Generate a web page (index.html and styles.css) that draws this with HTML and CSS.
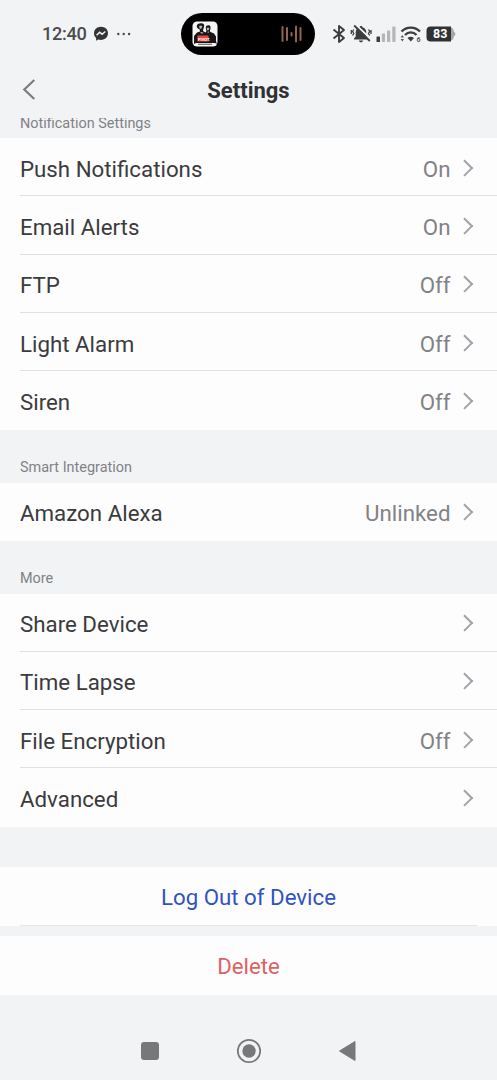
FILE: index.html
```html
<!DOCTYPE html>
<html lang="en">
<head>
<meta charset="utf-8">
<title>Settings</title>
<link rel="stylesheet" href="styles.css">
</head>
<body>
<div class="phone">
  <div class="status">
    <div class="status-left">
      <span class="clock">12:40</span>
      <svg class="messenger" width="16" height="16" viewBox="0 0 16 16"><path fill="#333436" d="M8 .8C3.900 .8 1 3.700 1 7.300c0 2 .8 3.700 2.100 4.800v2.600l2.200-1.200c.8.300 1.700.4 2.700.4 4.100 0 7-2.900 7-6.600S12.100.8 8 .8z"/><path fill="none" stroke="#f2f3f5" stroke-width="1.500" d="M3.600 9.200l3-3 2.500 2 3.200-2.700"/></svg>
      <svg width="16" height="4" viewBox="0 0 16 4"><g fill="#4a4b4d"><circle cx="2.300" cy="2" r="1.200"/><circle cx="7.700" cy="2" r="1.200"/><circle cx="13.100" cy="2" r="1.200"/></g></svg>
    </div>
    <div class="island">
      <svg width="26" height="26" viewBox="0 0 26 26"><rect x=".5" y=".5" width="25" height="25" rx="4.500" fill="#f5f5f5"/><path fill="#171719" d="M2 20v-5l3-3.500 3-1-.3-2L5.300 7C4 4.500 5.500 2.500 8 2.500c3-.7 5 1 4 3.200L11.300 8l-.3 2 2.500 1.500 1-1.500-.8-3c0-2.600 1.600-3 3.300-2.700 1.800.4 2 2.600 1 4.900v1.500l4 1.800 2 3V20l1 3-2-1H4l-2 1z"/><path fill="#bbb" d="M7.300 4.800h3l-.7 2.500-1.300.8-1-1.300zM14.700 6.700h2.600l-.5 2.200-1 .7-.9-1zM8 11l2 2 1.500-1.500zM15 11l1.500 1 .5-1.500z"/><path fill="#29292b" d="M6 22.800h14v.8H6z"/><path fill="#e74640" d="M5.500 14.500h11v6h-11z"/><text x="6" y="19.500" class="cover-title" fill="#fff">PIVOT.</text></svg>
      <svg width="24" height="18" viewBox="0 0 24 18"><g fill="none" stroke="#8f6450" stroke-width="2" stroke-linecap="round"><path d="M2.500 2v14"/><path d="M7 3v12"/><path d="M11.500 8v2.500"/><path d="M16 1.500v15"/><path d="M20.500 3v12"/></g></svg>
    </div>
    <div class="status-right">
      <svg width="14" height="20" viewBox="0 0 14 20"><path fill="none" stroke="#3b3c3e" stroke-width="1.900" stroke-linejoin="round" d="M1.500 5.500l10.500 8.500-5 4V2l5 4-10.500 8.500"/></svg>
      <svg width="22" height="20" viewBox="0 0 22 20"><path fill="#3b3c3e" d="M11 2c-1 0-1.500.6-1.500 1.300C7 4 5.700 6 5.700 8.500v4L4 14.500v1h14v-1l-1.700-2v-4c0-2.500-1.300-4.500-3.800-5.200C12.500 2.600 12 2 11 2zM8.800 16.500h4.400c-.3 1.200-1.200 1.800-2.200 1.800s-1.900-.6-2.200-1.800z"/><path stroke="#f2f3f5" stroke-width="2" d="M6 1L20.500 14.800"/><path stroke="#3b3c3e" stroke-width="1.800" d="M4.200 1.500L19.800 17"/><path fill="none" stroke="#3b3c3e" stroke-width="1.300" d="M3.800 5.500l-1.200 2 1.200 2-1.200 2M1.300 6v4M18.500 5.500l1.200 2-1.200 2 1.200 2M21 6v4"/></svg>
      <svg width="20" height="18" viewBox="0 0 20 18"><rect x=".5" y="11.500" width="3.500" height="5.500" rx=".6" fill="#3b3c3e"/><g fill="#b5b6b8"><rect x="5.800" y="8.500" width="3.200" height="8.500" rx=".6"/><rect x="11" y="5.500" width="3.200" height="11.500" rx=".6"/><rect x="16.300" y="1.500" width="3.200" height="15.500" rx=".6"/></g></svg>
      <svg width="22" height="18" viewBox="0 0 22 18"><g fill="none" stroke="#3b3c3e" stroke-width="2.300"><path d="M1.500 6.500c5-5.200 13.500-5.200 18.500 0"/><path d="M5 10c3.300-3.400 8.200-3.400 11.500 0"/></g><path fill="#3b3c3e" d="M7.500 13c1.800-1.700 4.700-1.700 6.500 0l-3.200 3.400z"/><path fill="#55565a" d="M.6 12.500l1.700-2.500L4 12.500zM.6 14l1.700 2.500L4 14z"/><text x="16.500" y="17" class="wifi-gen" fill="#55565a">6</text></svg>
      <svg width="30" height="16" viewBox="0 0 30 16"><path fill="#a5a6a8" d="M24 1.500c3 0 3.500 2 4 4.500 1 0 1.300 1 1.300 2s-.3 2-1.300 2c-.5 3-1.500 4.500-4 4.500z"/><path fill="#303133" d="M4.500.5H25v15H4.500c-2.500 0-4-1.500-4-4v-7c0-2.500 1.500-4 4-4z"/><text x="7" y="12.300" class="battery-level" fill="#fff">83</text></svg>
    </div>
  </div>
  <header class="header">
    <svg class="back" width="16" height="24" viewBox="0 0 16 24"><path fill="none" stroke="#7b7c7f" stroke-width="2.200" d="M14.300 2L4.300 11.500l10 9.500"/></svg>
    <h1 class="title">Settings</h1>
  </header>
  <main class="content">
    <h2 class="label label-cut">Notification Settings</h2>
    <section class="group">
      <div class="row"><span class="name">Push Notifications</span><span class="value">On</span><i class="chevron"></i></div>
      <div class="row"><span class="name">Email Alerts</span><span class="value">On</span><i class="chevron"></i></div>
      <div class="row"><span class="name">FTP</span><span class="value">Off</span><i class="chevron"></i></div>
      <div class="row"><span class="name">Light Alarm</span><span class="value">Off</span><i class="chevron"></i></div>
      <div class="row"><span class="name">Siren</span><span class="value">Off</span><i class="chevron"></i></div>
    </section>
    <h2 class="label">Smart Integration</h2>
    <section class="group">
      <div class="row"><span class="name">Amazon Alexa</span><span class="value">Unlinked</span><i class="chevron"></i></div>
    </section>
    <h2 class="label">More</h2>
    <section class="group">
      <div class="row"><span class="name">Share Device</span><i class="chevron"></i></div>
      <div class="row"><span class="name">Time Lapse</span><i class="chevron"></i></div>
      <div class="row"><span class="name">File Encryption</span><span class="value">Off</span><i class="chevron"></i></div>
      <div class="row"><span class="name">Advanced</span><i class="chevron"></i></div>
    </section>
    <div class="action logout">Log Out of Device</div>
    <div class="action delete">Delete</div>
  </main>
  <nav class="nav">
    <svg width="26" height="26" viewBox="0 0 26 26"><rect x="4" y="4" width="18" height="18" rx="3" fill="#77787a"/></svg>
    <svg width="26" height="26" viewBox="0 0 26 26"><circle cx="13" cy="13" r="11.200" fill="none" stroke="#77787a" stroke-width="1.700"/><circle cx="13" cy="13" r="6.700" fill="#77787a"/></svg>
    <svg width="26" height="26" viewBox="0 0 26 26"><path fill="#77787a" stroke="#77787a" stroke-linejoin="round" d="M4.500 13L20 3.500v19z"/></svg>
  </nav>
</div>
</body>
</html>
```
FILE: styles.css
```css
* { box-sizing: border-box; }
body { margin: 0; background: #f2f3f5; font-family: Roboto, sans-serif; color: #3b3b3d; }
svg { display: block; flex: none; }
.phone { width: 497px; height: 1080px; display: flex; flex-direction: column; overflow: hidden; }
.status { height: 67px; display: grid; grid-template-columns: 181px 134px 1fr; align-items: center; flex: none; }
.status-left { display: flex; align-items: center; padding-left: 42px; }
.clock { font-size: 18.200px; line-height: 22px; font-weight: 500; width: 51px; color: #4a4b4d; letter-spacing: -.3px; }
.messenger { margin-right: 7px; }
.island { height: 42px; border-radius: 21px; background: #000; display: flex; align-items: center; justify-content: space-between; padding: 0 11px; }
.cover-title { font: 700 4px Roboto, sans-serif; }
.status-right { display: flex; align-items: center; padding-left: 17px; gap: 4px; }
.wifi-gen { font: 700 7px Roboto, sans-serif; }
.battery-level { font: 700 12.500px Roboto, sans-serif; }
.header { height: 51px; flex: none; display: grid; grid-template-columns: 60px 1fr 60px; align-items: center; padding-bottom: 4px; }
.back { margin: -2px 0 0 20px; }
.title { margin: 0; text-align: center; font-size: 22px; line-height: 28px; font-weight: 700; color: #303134; }
.content { flex: none; }
.label { margin: 0; height: 52.600px; padding: 27.700px 20px 0; font-size: 14.450px; line-height: 20px; font-weight: 400; color: #818286; }
.label-cut { height: 20.400px; padding-top: 0; line-height: 11px; overflow: hidden; }
.group { background: #fdfdfe; }
.row { height: 58.350px; margin-left: 20px; padding: 2.400px 24px 0 0; display: flex; align-items: center; background: linear-gradient(#e0e1e3, #e0e1e3) 0 57px / 100% 1px no-repeat; font-size: 22.300px; line-height: 28px; }
.row:last-child { background: none; }
.name { flex: 1; }
.value { color: #828284; }
.chevron { flex: none; width: 11.500px; height: 11.500px; margin: -2.600px 2.500px 0 8.500px; border: solid #a2a3a9; border-width: 2.200px 2.200px 0 0; transform: rotate(45deg); }
.action { height: 58.500px; padding-top: 2px; background: #fdfdfe; display: grid; place-items: center; font-size: 22.250px; line-height: 28px; }
.logout { margin: 40px 0 10.500px; color: #3153bd; background: linear-gradient(#e5e6e8, #e5e6e8) center 57.500px / 457px 1px no-repeat #fdfdfe; }
.delete { color: #dc6361; }
.nav { flex: 1; display: flex; justify-content: center; gap: 73px; padding-top: 43px; }
```
